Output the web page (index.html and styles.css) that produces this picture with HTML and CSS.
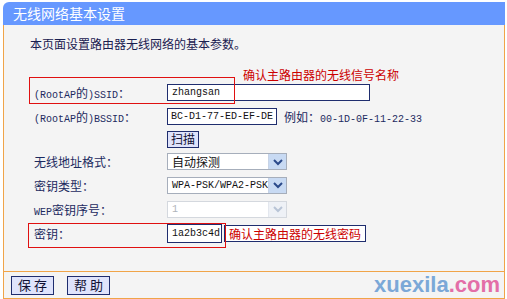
FILE: index.html
```html
<!DOCTYPE html>
<html lang="zh-CN">
<head>
    <meta charset="UTF-8">
    <title>无线网络基本设置</title>
    <link rel="stylesheet" href="styles.css">
</head>
<body>

    <div class="panel">
        <div class="panel-title">无线网络基本设置</div>

        <div class="content">
            <p class="intro">本页面设置路由器无线网络的基本参数。</p>

            <div class="form">
                <div class="row">
                    <div class="label"><span class="en">(RootAP</span>的<span class="en">)SSID</span>：</div>
                    <div class="input wide">zhangsan</div>
                </div>
                <div class="row">
                    <div class="label"><span class="en">(RootAP</span>的<span class="en">)BSSID</span>：</div>
                    <div class="input mid">BC-D1-77-ED-EF-DE</div>
                    <span class="hint">例如：<span class="en">00-1D-0F-11-22-33</span></span>
                </div>
                <div class="row row-scan">
                    <div class="label"></div>
                    <button class="btn">扫描</button>
                </div>
                <div class="row row-addr">
                    <div class="label">无线地址格式：</div>
                    <div class="select">
                        <span class="select-text">自动探测</span>
                        <span class="arrow"><svg width="12" height="8" viewBox="0 0 12 8"><polyline points="2,2 6,6 10,2" fill="none" stroke="#2b4a8a" stroke-width="2"/></svg></span>
                    </div>
                </div>
                <div class="row">
                    <div class="label">密钥类型：</div>
                    <div class="select">
                        <span class="select-text en">WPA-PSK/WPA2-PSK</span>
                        <span class="arrow"><svg width="12" height="8" viewBox="0 0 12 8"><polyline points="2,2 6,6 10,2" fill="none" stroke="#2b4a8a" stroke-width="2"/></svg></span>
                    </div>
                </div>
                <div class="row">
                    <div class="label"><span class="en">WEP</span>密钥序号：</div>
                    <div class="select disabled">
                        <span class="select-text en">1</span>
                        <span class="arrow"><svg width="12" height="8" viewBox="0 0 12 8"><polyline points="2,2 6,6 10,2" fill="none" stroke="#b8c4d6" stroke-width="2"/></svg></span>
                    </div>
                </div>
                <div class="row">
                    <div class="label">密钥：</div>
                    <div class="input small">1a2b3c4d</div>
                    <span class="note-box">确认主路由器的无线密码</span>
                </div>

                <div class="mark mark-ssid"></div>
                <div class="mark mark-key"></div>
                <span class="note note-ssid">确认主路由器的无线信号名称</span>
            </div>
        </div>

        <div class="footer">
            <button class="btn btn-foot">保 存</button>
            <button class="btn btn-foot">帮 助</button>
            <span class="watermark">xuexila<span class="dot-com">.com</span></span>
        </div>
    </div>

</body>
</html>
```

FILE: styles.css
```css
body {
    margin: 0;
    background: #ffffff;
    font-family: "Noto Sans CJK SC", sans-serif;
    font-size: 12px;
    color: #1c2a60;
}
.en {
    font-family: "Liberation Mono", monospace;
    font-size: 10px;
}
.panel {
    position: relative;
    width: 502px;
    margin: 2px 2px 0 3px;
}
.panel-title {
    height: 23px;
    line-height: 23px;
    padding-left: 10px;
    background: #6698ff;
    color: #ffffff;
    font-size: 14px;
    border-top-left-radius: 6px;
}
.content {
    background: #f4f4f4;
    border-left: 1px solid #f0a448;
    border-right: 1px solid #f0a448;
    border-bottom: 1px solid #f0a448;
    padding: 11px 0 26px 0;
}
.intro {
    margin: 0 0 28px 26px;
    line-height: 16px;
    color: #1a2050;
}
.form {
    position: relative;
}
.row {
    display: flex;
    align-items: center;
    height: 24px;
}
.row-scan {
    height: 22px;
}
.row-addr {
    height: 23px;
}
.label {
    box-sizing: border-box;
    width: 163px;
    padding-left: 30px;
    white-space: nowrap;
}
.input {
    box-sizing: border-box;
    height: 17px;
    line-height: 15px;
    padding-left: 4px;
    border: 1px solid #1f2d6e;
    background: #ffffff;
    font-family: "Liberation Mono", monospace;
    font-size: 10px;
    color: #111111;
    overflow: hidden;
    white-space: nowrap;
}
.input.wide {
    width: 203px;
}
.input.mid {
    width: 110px;
    padding-left: 3px;
}
.input.small {
    width: 55px;
    height: 19px;
    line-height: 17px;
}
.hint {
    margin-left: 7px;
}
.btn {
    box-sizing: border-box;
    height: 17px;
    padding: 0 3px;
    border: 1px solid #1f2d6e;
    background: #dfe3fb;
    font-family: "Noto Sans CJK SC", sans-serif;
    font-size: 12px;
    line-height: 14px;
    color: #111133;
}
.select {
    box-sizing: border-box;
    display: flex;
    align-items: center;
    width: 120px;
    height: 17px;
    border: 1px solid #a6aebb;
    background: #ffffff;
}
.select-text {
    flex: 1;
    padding-left: 4px;
    color: #111111;
    white-space: nowrap;
    overflow: hidden;
}
.arrow {
    display: flex;
    align-items: center;
    justify-content: center;
    width: 17px;
    height: 15px;
    border-left: 1px solid #c7d3e6;
    background: #c8daf3;
}
.select.disabled {
    border-color: #d4d8de;
}
.select.disabled .select-text {
    color: #b0b4ba;
}
.select.disabled .arrow {
    background: #eef1f6;
    border-left-color: #e3e7ee;
}
.note-box {
    box-sizing: border-box;
    height: 17px;
    line-height: 15px;
    margin-left: 2px;
    padding: 0 4px;
    border: 1px solid #1f2d6e;
    background: #ffffff;
    color: #cc0000;
}
.note {
    color: #cc0000;
    white-space: nowrap;
}
.mark {
    position: absolute;
    border: 1px solid #e01010;
}
.mark-ssid {
    left: 25px;
    top: -3px;
    width: 204px;
    height: 25px;
}
.mark-key {
    left: 24px;
    top: 143px;
    width: 196px;
    height: 23px;
}
.note-ssid {
    position: absolute;
    left: 239px;
    top: -13px;
    line-height: 16px;
}
.footer {
    position: relative;
    display: flex;
    align-items: center;
    gap: 13px;
    height: 26px;
    padding-left: 7px;
    background: #f4f4f4;
    border-left: 1px solid #f0a448;
    border-right: 1px solid #f0a448;
    border-bottom: 1px solid #f0a448;
}
.btn-foot {
    width: 43px;
    height: 19px;
    font-size: 13px;
    line-height: 16px;
}
.watermark {
    position: absolute;
    right: 4px;
    top: 1px;
    font-family: "Liberation Sans", Arial, sans-serif;
    font-size: 22px;
    font-weight: bold;
    line-height: 24px;
    color: #6fa0d4;
    opacity: 0.9;
}
.dot-com {
    color: #e2609f;
}
```
